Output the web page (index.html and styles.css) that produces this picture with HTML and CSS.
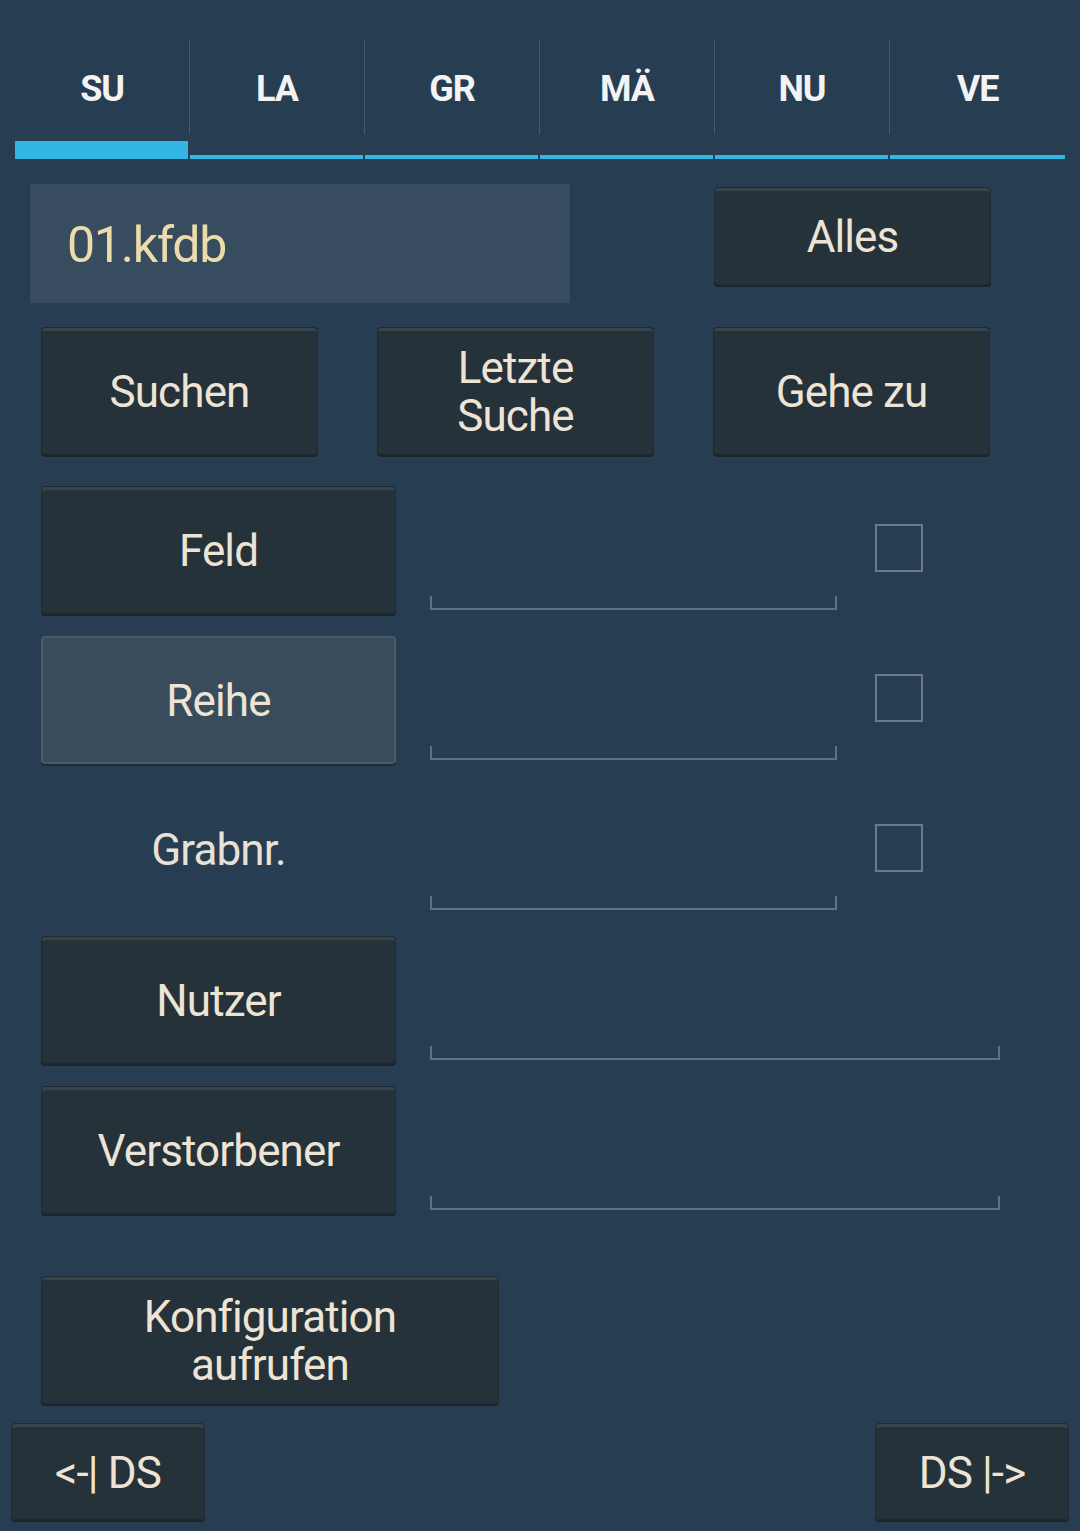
FILE: index.html
```html
<!DOCTYPE html>
<html lang="de">
<head>
<meta charset="utf-8">
<title>Suche</title>
<link rel="stylesheet" href="styles.css">
</head>
<body>
<div class="screen">
  <nav class="tabs">
    <div class="tab active"><span class="tab-label">SU</span><span class="ind"></span></div>
    <div class="tab"><span class="tab-label">LA</span><span class="ind"></span></div>
    <div class="tab"><span class="tab-label">GR</span><span class="ind"></span></div>
    <div class="tab"><span class="tab-label">MÄ</span><span class="ind"></span></div>
    <div class="tab"><span class="tab-label">NU</span><span class="ind"></span></div>
    <div class="tab last"><span class="tab-label">VE</span><span class="ind"></span></div>
  </nav>

  <section class="content">
    <div class="row-file">
      <div class="filename">01.kfdb</div>
      <button class="btn btn-alles">Alles</button>
    </div>

    <div class="row-actions">
      <button class="btn btn-action">Suchen</button>
      <button class="btn btn-action">Letzte<br>Suche</button>
      <button class="btn btn-action">Gehe zu</button>
    </div>

    <div class="form">
      <div class="frow">
        <button class="btn btn-field">Feld</button>
        <div class="edit"></div>
        <div class="check"></div>
      </div>
      <div class="frow">
        <button class="btn btn-field btn-selected">Reihe</button>
        <div class="edit"></div>
        <div class="check"></div>
      </div>
      <div class="frow">
        <div class="label">Grabnr.</div>
        <div class="edit"></div>
        <div class="check"></div>
      </div>
      <div class="frow">
        <button class="btn btn-field">Nutzer</button>
        <div class="edit wide"></div>
      </div>
      <div class="frow">
        <button class="btn btn-field">Verstorbener</button>
        <div class="edit wide"></div>
      </div>
    </div>

    <button class="btn btn-config">Konfiguration<br>aufrufen</button>
  </section>

  <div class="nav-row">
    <button class="btn btn-nav">&lt;-| DS</button>
    <button class="btn btn-nav">DS |-&gt;</button>
  </div>
</div>
</body>
</html>
```

FILE: styles.css
```css
html, body {
  margin: 0;
  padding: 0;
  background: #273d52;
}

body {
  width: 1080px;
  height: 1531px;
  overflow: hidden;
  font-family: Roboto, "Liberation Sans", sans-serif;
}

.screen {
  display: flex;
  flex-direction: column;
}

/* Tabs */
.tabs {
  display: grid;
  grid-template-columns: repeat(6, 175px);
  margin: 39px 15px 0 15px;
}

.tab {
  display: flex;
  flex-direction: column;
}

.tab-label {
  height: 95px;
  display: flex;
  align-items: center;
  justify-content: center;
  font-weight: 700;
  font-size: 36px;
  letter-spacing: -0.03em;
  color: #f3f3f3;
  border-right: 1px solid #47596b;
  padding-top: 4px;
  box-sizing: border-box;
}

.tab.last .tab-label {
  border-right: none;
}

.ind {
  height: 25px;
  width: calc(100% - 2px);
  display: block;
  box-sizing: border-box;
  border-bottom: 4px solid #33b5e5;
}

.tab.last .ind {
  width: 100%;
}

.tab.active .ind {
  border-bottom-width: 18px;
}

/* Content */
.content {
  display: flex;
  flex-direction: column;
  padding-left: 41px;
}

.btn {
  font-family: Roboto, "Liberation Sans", sans-serif;
  font-size: 44px;
  letter-spacing: -0.02em;
  line-height: 48px;
  color: #ede4d6;
  background: #263239;
  border: 1px solid #1f2a31;
  border-radius: 4px;
  box-shadow: inset 0 3px 0 #37444b, 0 2px 0 #1b252c;
  padding: 2px 0 0 0;
  margin: 0;
  box-sizing: border-box;
  display: flex;
  align-items: center;
  justify-content: center;
  text-align: center;
}

.row-file {
  display: flex;
  align-items: flex-start;
  margin-top: 25px;
}

.filename {
  margin-left: -11px;
  width: 540px;
  height: 119px;
  background: #374c5e;
  color: #ecdcab;
  font-size: 50px;
  letter-spacing: -0.025em;
  display: flex;
  align-items: center;
  padding-left: 37px;
  padding-top: 3px;
  box-sizing: border-box;
}

.btn-alles {
  margin-left: 144px;
  margin-top: 3px;
  width: 277px;
  height: 98px;
}

.row-actions {
  display: flex;
  gap: 59px;
  margin-top: 24px;
}

.btn-action {
  width: 277px;
  height: 128px;
}

.form {
  display: flex;
  flex-direction: column;
  gap: 22px;
  margin-top: 31px;
}

.frow {
  display: grid;
  grid-template-columns: 355px 34px 407px 38px 47px 78px;
  height: 128px;
}

.btn-field {
  grid-column: 1;
  width: 355px;
  height: 128px;
}

.btn-selected {
  background: #394c5c;
  border: 2px solid #4a5a67;
  box-shadow: 0 2px 0 #1f2b34;
}

.label {
  grid-column: 1;
  display: flex;
  align-items: center;
  justify-content: center;
  font-size: 44px;
  letter-spacing: -0.02em;
  color: #e9e1d5;
}

.edit {
  grid-column: 3;
  align-self: end;
  height: 12px;
  margin-bottom: 4px;
  border: 2px solid #607282;
  border-top: none;
}

.edit.wide {
  grid-column: 3 / 7;
}

.check {
  grid-column: 5;
  align-self: start;
  margin-top: 38px;
  width: 48px;
  height: 48px;
  box-sizing: border-box;
  border: 2px solid #6b7a87;
}

.btn-config {
  margin-top: 62px;
  width: 458px;
  height: 128px;
}

/* Bottom nav */
.nav-row {
  display: flex;
  justify-content: space-between;
  margin: 19px 11px 0 11px;
}

.btn-nav {
  width: 194px;
  height: 97px;
}
```
